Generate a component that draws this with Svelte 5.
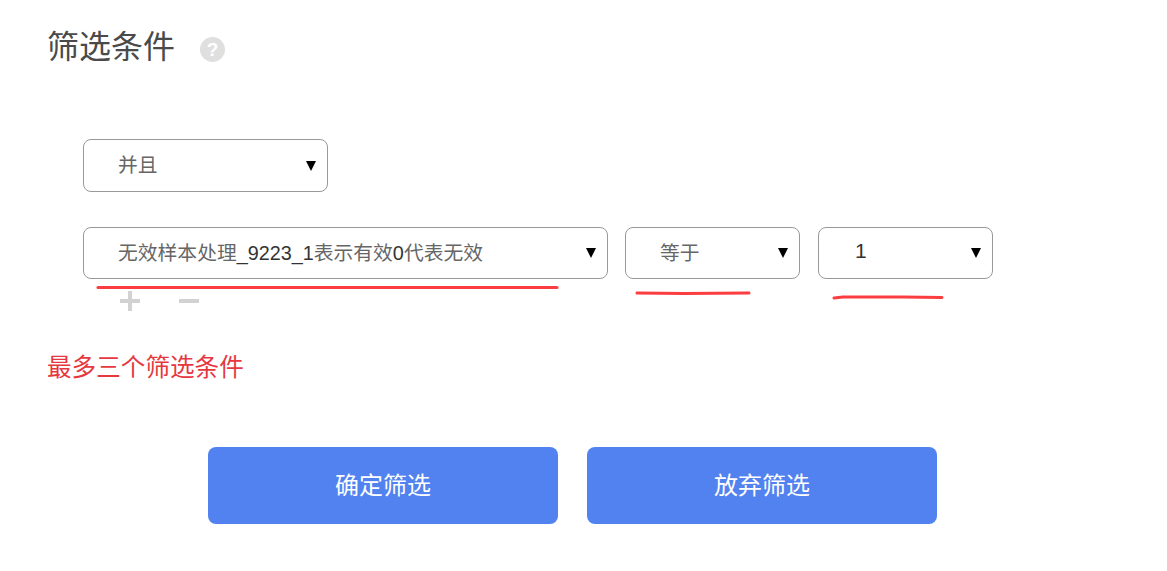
<script>
  let conditions = [
    { parts: ["无效样本处理", "_9223_1", "表示有效", "0", "代表无效"], size: "wide" },
    { parts: ["等于"], size: "narrow" },
    { parts: ["", "1"], size: "narrow", num: true },
  ];
</script>

<div class="page">
  <header class="head">
    <h1>筛选条件</h1>
    <span class="help">?</span>
  </header>

  <div class="filters">
    <div class="select logic">
      <span class="value">并且</span>
      <i class="caret"></i>
    </div>

    <div class="row">
      {#each conditions as c}
        <div class="select {c.size}">
          <span class="value" class:num={c.num}>
            <!-- odd parts are latin/digits, they render darker than the CJK runs -->
            {#each c.parts as part, i}<span class:latin={i % 2 === 1}>{part}</span>{/each}
          </span>
          <i class="caret"></i>
        </div>
      {/each}
      <!-- hand-drawn marks on top of the screenshot -->
      <svg class="marks" width="1000" height="80" viewBox="0 0 1000 80" fill="none">
        <path d="M15 60.5 L200 60.5 L400 60.5 L474 60.5" stroke="#fb3d40" stroke-width="3" stroke-linecap="round" />
        <path d="M554 66 L600 66.5 L666 66" stroke="#fb3d40" stroke-width="3" stroke-linecap="round" />
        <path d="M751 71 L760 70 L820 70 L859 70.5" stroke="#fb3d40" stroke-width="3" stroke-linecap="round" />
      </svg>
    </div>

    <div class="tools">
      <span class="plus"></span>
      <span class="minus"></span>
    </div>
  </div>

  <p class="warn">最多三个筛选条件</p>

  <div class="actions">
    <button type="button">确定筛选</button>
    <button type="button">放弃筛选</button>
  </div>
</div>

<style>
  :global(body) {
    background: #fff;
  }
  .page {
    width: 1167px;
    height: 571px;
    overflow: hidden;
    box-sizing: border-box;
    padding: 26px 0 0 47px;
    font-family: "Liberation Sans", "Noto Sans CJK SC", sans-serif;
  }
  .head {
    display: flex;
    align-items: center;
    height: 42px;
  }
  h1 {
    margin: 0;
    font-size: 32px;
    line-height: 42px;
    font-weight: 400;
    color: #4a4a4a;
  }
  .help {
    width: 25px;
    height: 25px;
    margin: 4px 0 0 25px;
    border-radius: 50%;
    background: #dfdfdf;
    color: #fff;
    font-size: 19px;
    font-weight: 700;
    line-height: 25px;
    text-align: center;
  }
  .filters {
    margin: 71px 0 0 36px;
  }
  .select {
    display: flex;
    align-items: center;
    justify-content: space-between;
    box-sizing: border-box;
    height: 52px;
    padding: 0 11px 0 34px;
    border: 1px solid #999;
    border-radius: 8px;
    background: #fff;
    font-size: 19.8px;
    color: #666;
  }
  .logic {
    width: 245px;
    height: 53px;
  }
  .row {
    position: relative;
    display: flex;
    margin-top: 35px;
  }
  .wide {
    width: 525px;
    margin-right: 17px;
  }
  .narrow {
    width: 175px;
    margin-right: 18px;
  }
  .value {
    margin-bottom: 4px;
    white-space: nowrap;
  }
  .value.num {
    margin-left: 2px;
    font-size: 21px;
  }
  .latin {
    color: #333;
  }
  .caret {
    width: 0;
    height: 0;
    border-left: 5px solid transparent;
    border-right: 5px solid transparent;
    border-top: 10px solid #000;
  }
  .marks {
    position: absolute;
    left: 0;
    top: 0;
    pointer-events: none;
  }
  .tools {
    display: flex;
    gap: 39px;
    margin: 12px 0 0 37px;
  }
  .plus,
  .minus {
    position: relative;
    width: 20px;
    height: 20px;
  }
  .plus::before,
  .minus::before {
    content: "";
    position: absolute;
    left: 0;
    right: 0;
    top: 8px;
    height: 4px;
    background: #d2d2d2;
  }
  .plus::after {
    content: "";
    position: absolute;
    top: 0;
    bottom: 0;
    left: 8px;
    width: 4px;
    background: #d2d2d2;
  }
  .warn {
    margin: 40px 0 0;
    font-size: 24.6px;
    line-height: 34px;
    color: #e5393f;
  }
  .actions {
    display: flex;
    gap: 29px;
    margin: 62px 0 0 161px;
  }
  button {
    width: 350px;
    height: 77px;
    padding: 0 0 4px;
    border: none;
    border-radius: 8px;
    background: #5282f0;
    color: #fff;
    font-family: inherit;
    font-size: 24px;
  }
</style>
